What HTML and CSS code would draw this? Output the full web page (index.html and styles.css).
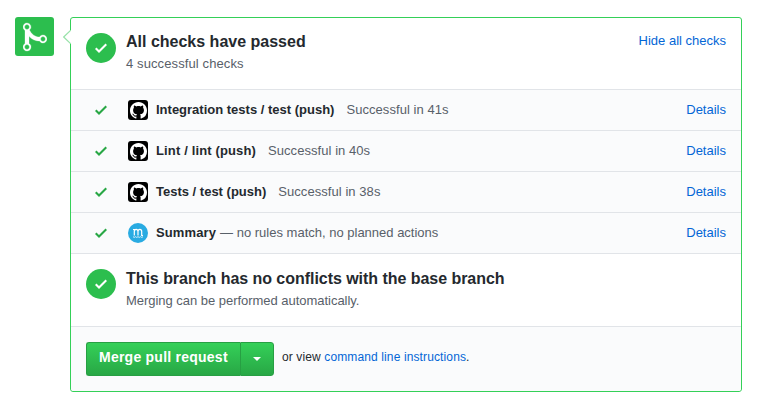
FILE: index.html
```html
<!DOCTYPE html>
<html lang="en">
<head>
<meta charset="utf-8">
<title>Merge pull request</title>
<link rel="stylesheet" href="styles.css">
</head>
<body>
<svg class="sprites" aria-hidden="true">
  <symbol id="check" viewBox="0 0 12 16"><path d="M12 5l-8 8-4-4 1.5-1.5L4 10l6.5-6.5L12 5z"/></symbol>
  <symbol id="github" viewBox="0 0 16 16"><path d="M8 0C3.58 0 0 3.58 0 8c0 3.54 2.29 6.53 5.47 7.59.4.07.55-.17.55-.38 0-.19-.01-.82-.01-1.49-2.01.37-2.53-.49-2.69-.94-.09-.23-.48-.94-.82-1.13-.28-.15-.68-.52-.01-.53.63-.01 1.08.58 1.23.82.72 1.21 1.87.87 2.33.66.07-.52.28-.87.51-1.07-1.78-.2-3.64-.89-3.64-3.95 0-.87.31-1.59.82-2.15-.08-.2-.36-1.02.08-2.12 0 0 .67-.21 2.2.82.64-.18 1.32-.27 2-.27.68 0 1.36.09 2 .27 1.53-1.04 2.2-.82 2.2-.82.44 1.1.16 1.92.08 2.12.51.56.82 1.27.82 2.15 0 3.07-1.87 3.75-3.65 3.95.29.25.54.73.54 1.48 0 1.07-.01 1.93-.01 2.2 0 .21.15.46.55.38A8.013 8.013 0 0 0 16 8c0-4.42-3.58-8-8-8z"/></symbol>
</svg>
<main class="merge">
  <div class="state">
    <svg width="24" height="32" viewBox="0 0 12 16"><path fill-rule="evenodd" d="M10 7c-.73 0-1.38.41-1.73 1.02V8C7.22 7.98 6 7.64 5.14 6.98c-.75-.58-1.5-1.61-1.89-2.44A1.993 1.993 0 0 0 2 .99C.89.99 0 1.89 0 3a2 2 0 0 0 1 1.72v6.56c-.59.35-1 .99-1 1.72 0 1.11.89 2 2 2a1.993 1.993 0 0 0 1-3.72V7.67c.67.7 1.44 1.27 2.3 1.69.86.42 2.03.63 2.97.64v-.02c.36.61 1 1.02 1.73 1.02 1.11 0 2-.89 2-2 0-1.11-.89-2-2-2zm-6.8 6c0 .66-.55 1.2-1.2 1.2-.65 0-1.2-.55-1.2-1.2 0-.65.55-1.2 1.2-1.2.65 0 1.2.55 1.2 1.2zM2 4.2C1.34 4.2.8 3.65.8 3c0-.65.55-1.2 1.2-1.2.65 0 1.2.55 1.2 1.2 0 .65-.55 1.2-1.2 1.2zm8 6c-.66 0-1.2-.55-1.2-1.2 0-.65.55-1.2 1.2-1.2.65 0 1.2.55 1.2 1.2 0 .65-.55 1.2-1.2 1.2z"/></svg>
  </div>
  <div class="box">
    <svg class="pointer" width="8" height="14" viewBox="0 0 8 14"><path d="M8 0L.7 7 8 14"/></svg>
    <section class="section">
      <span class="badge"><svg width="12" height="16"><use href="#check"/></svg></span>
      <div class="copy">
        <h3>All checks have passed</h3>
        <p class="count">4 successful checks</p>
      </div>
      <a class="link">Hide all checks</a>
    </section>
    <ul class="checks">
      <li class="row">
        <svg class="tick" width="12" height="16"><use href="#check"/></svg>
        <span class="avatar"><svg width="17" height="17"><use href="#github"/></svg></span>
        <strong>Integration tests / test (push)</strong><span class="result">Successful in 41s</span>
        <a class="link">Details</a>
      </li>
      <li class="row">
        <svg class="tick" width="12" height="16"><use href="#check"/></svg>
        <span class="avatar"><svg width="17" height="17"><use href="#github"/></svg></span>
        <strong class="lint">Lint / lint (push)</strong><span class="result">Successful in 40s</span>
        <a class="link">Details</a>
      </li>
      <li class="row">
        <svg class="tick" width="12" height="16"><use href="#check"/></svg>
        <span class="avatar"><svg width="17" height="17"><use href="#github"/></svg></span>
        <strong>Tests / test (push)</strong><span class="result">Successful in 38s</span>
        <a class="link">Details</a>
      </li>
      <li class="row">
        <svg class="tick" width="12" height="16"><use href="#check"/></svg>
        <span class="avatar avatar-m"><svg width="20" height="20" viewBox="0 0 20 20"><path class="m" d="M5 6.500h1.300v6M6.300 8.500c0-2.800 3.700-2.800 3.700 0v4M10 8.500c0-2.800 3.700-2.800 3.700 0v4h1.300"/><path class="waves" d="M5 13.700q1.200 1.400 2.500 0q1.200 1.400 2.500 0q1.200 1.400 2.500 0q1.200 1.400 2.500 0"/></svg></span>
        <strong class="name">Summary</strong><span class="summary">— no rules match, no planned actions</span>
        <a class="link">Details</a>
      </li>
    </ul>
    <section class="section">
      <span class="badge"><svg width="12" height="16"><use href="#check"/></svg></span>
      <div class="copy">
        <h3 class="branch">This branch has no conflicts with the base branch</h3>
        <p class="auto">Merging can be performed automatically.</p>
      </div>
    </section>
    <footer class="actions">
      <div class="buttons"><button class="btn main" type="button">Merge pull request</button><button class="btn more" type="button" aria-label="Select merge method"><i class="caret"></i></button></div>
      <p class="hint">or view <a>command line instructions</a>.</p>
    </footer>
  </div>
</main>
</body>
</html>
```
FILE: styles.css
```css
* { box-sizing: border-box; }
body { margin: 0; background: #fff; color: #24292e; font: 13px/20px "Liberation Sans", Arial, sans-serif; }
h3, p, ul { margin: 0; padding: 0; }
a { color: #0366d6; text-decoration: none; }
svg { display: block; fill: currentColor; }
.sprites { position: absolute; width: 0; height: 0; }
.merge { display: flex; align-items: flex-start; gap: 16px; padding: 17px 16px 0 15px; }
.state { display: flex; flex: none; width: 39px; height: 39px; padding: 4px 0 0 8px; border-radius: 3px; background: #2cbe4e; color: #fff; }
.state path { stroke: #fff; stroke-width: .15; }
.box { position: relative; flex: 1; height: 375px; border: 1px solid #34d058; border-radius: 3px; background: #fff; }
.pointer { position: absolute; left: -8px; top: 12px; }
.pointer path { fill: #fff; stroke: #98e2a9; stroke-width: 1.2; }
.section { display: flex; height: 71px; padding: 15px 15px 0; }
.section + .checks { border-top: 1px solid #e1e4e8; }
.badge { display: flex; flex: none; align-items: center; justify-content: center; width: 30px; height: 30px; margin-right: 10px; border-radius: 50%; background: #2cbe4e; color: #fff; }
.copy { flex: 1; margin-top: -3px; white-space: nowrap; }
h3 { font-size: 16px; line-height: 24px; }
.copy p { color: #586069; line-height: 20px; }
.count { letter-spacing: .11px; }
.branch { letter-spacing: -.04px; }
.auto { letter-spacing: -.03px; }
.section .link { margin-top: -2px; }
.checks { list-style: none; background: #fafbfc; }
.row { display: flex; align-items: center; height: 41px; padding: 0 15px; border-bottom: 1px solid #e1e4e8; white-space: nowrap; }
.tick { margin: 0 21px 0 9px; color: #28a745; }
.avatar { display: flex; flex: none; align-items: center; justify-content: center; width: 20px; height: 20px; margin-right: 8px; border-radius: 3px; background: #000; color: #fff; }
.avatar-m { border-radius: 50%; background: #29abe2; }
.m, .waves { fill: none; stroke: #fff; stroke-width: 1.2; }
.waves { stroke-width: .8; }
.lint { letter-spacing: .14px; }
.name { letter-spacing: .12px; }
.result { margin-left: 12px; color: #586069; letter-spacing: .06px; }
.summary { margin-left: 4px; color: #586069; }
.link { margin-left: auto; }
.checks + .section { height: 72px; }
.checks + .section .copy { margin-top: -2px; }
.actions { display: flex; align-items: flex-start; height: 65px; padding: 15px; border-top: 1px solid #e1e4e8; border-radius: 0 0 3px 3px; background: #fafbfc; }
.buttons { display: flex; width: 188px; height: 34px; }
.btn { height: 34px; margin: 0; padding: 0; border: 1px solid #279f43; color: #fff; background: linear-gradient(#34d058, #28a745); font: bold 14px/20px "Liberation Sans", Arial, sans-serif; white-space: nowrap; }
.main { width: 154px; padding: 0 0 4px 12px; border-right: 0; border-radius: 3px 0 0 3px; letter-spacing: .24px; text-align: left; }
.more { display: flex; align-items: center; justify-content: center; width: 34px; border-radius: 0 3px 3px 0; }
.caret { margin-top: -1px; border: 4px solid transparent; border-top-color: #fff; border-bottom: 0; }
.hint { margin: 5px 0 0 8px; font-size: 12px; letter-spacing: .12px; white-space: nowrap; }
```
